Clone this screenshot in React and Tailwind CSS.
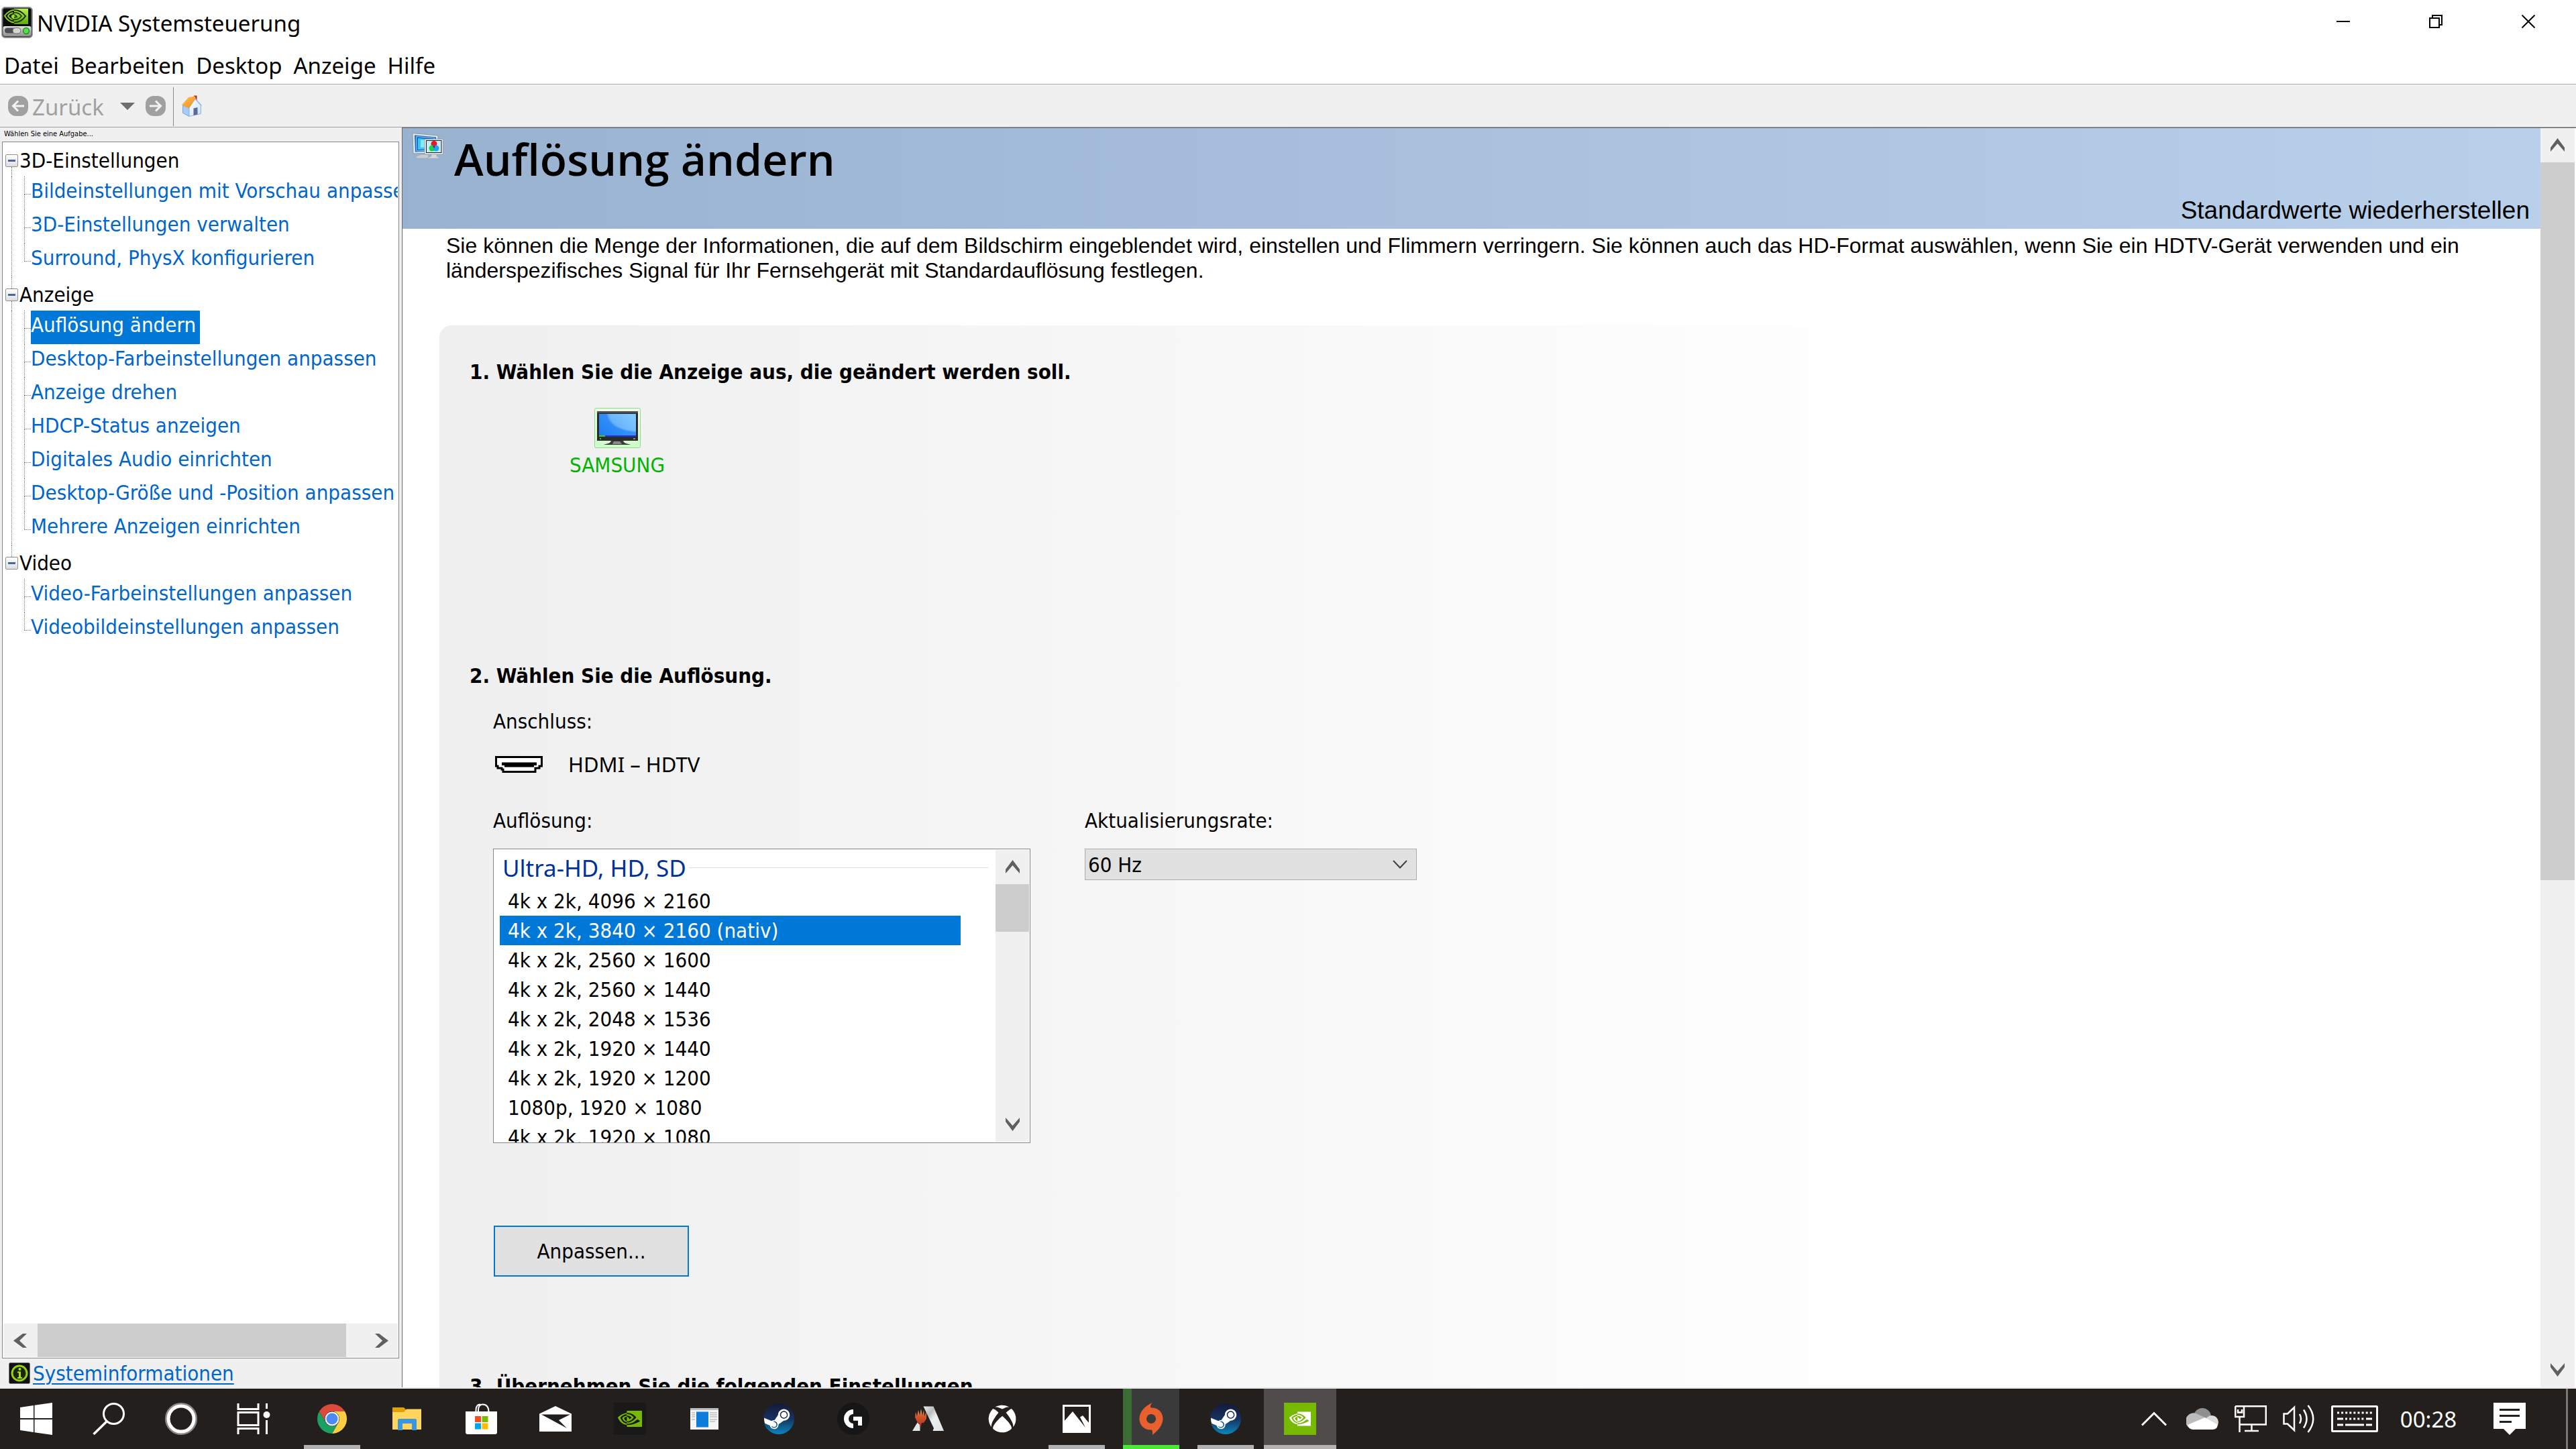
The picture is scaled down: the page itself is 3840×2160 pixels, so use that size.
import { SiNvidia, SiSteam } from "react-icons/si";
import { FaXbox } from "react-icons/fa";

const tahoma = "font-['DejaVu_Sans_Condensed','DejaVu_Sans',sans-serif]";
const segoe = "font-['Noto_Sans',sans-serif]";
const arial = "font-['Liberation_Sans',Arial,sans-serif]";

/* ---------- icons ---------- */

function AppIcon() {
  return (
    <svg className="size-[47px] shrink-0" viewBox="0 0 47 47" aria-hidden="true">
      <defs>
        <linearGradient id="appGreen" x1="0" y1="0" x2="0" y2="1">
          <stop offset="0" stopColor="#b7f04a" />
          <stop offset="1" stopColor="#5fa80c" />
        </linearGradient>
        <linearGradient id="appBar" x1="0" y1="0" x2="0" y2="1">
          <stop offset="0" stopColor="#e2e2e2" />
          <stop offset="1" stopColor="#8f8f8f" />
        </linearGradient>
      </defs>
      <rect x="0.5" y="0.5" width="46" height="46" rx="5" fill="#6f7474" stroke="#a5a9a9" />
      <rect x="2.5" y="2.5" width="42" height="42" rx="3" fill="#0d0d0d" />
      <rect x="19" y="3" width="21" height="23" fill="url(#appGreen)" />
      <path d="M19 5 C12 5 7 11 5 13.500 C8 19 13 23 19 23.500" fill="none" stroke="#8ccf1f" strokeWidth="2" />
      <path d="M19 9 C14 9 11 12 10 14 C12 17 15 19.500 19 19.500" fill="none" stroke="#8ccf1f" strokeWidth="2" />
      <path d="M19 5 C28 5 33 10 36 14 C32 20 27 23.500 19 23.500" fill="none" stroke="#16310a" strokeWidth="2" />
      <path d="M17 9 C24 8 28 11 30 14 C27 18 23 20 18 19 C15 17 14 15 15 13 C18 11 22 12 23 15 L19 16" fill="none" stroke="#22490c" strokeWidth="2" />
      <path d="M15 14 C16 12 18 11.500 19 11.500 V18.500 C16 18 15 16 15 14Z" fill="#a5e02c" />
      <rect x="2.500" y="29" width="42" height="15" rx="3" fill="url(#appBar)" />
      <rect x="5" y="31.500" width="24" height="8" rx="4" fill="#4b4f52" />
      <rect x="17" y="31.500" width="12" height="8.500" rx="4" fill="#d6d6d6" stroke="#707070" />
      <circle cx="37" cy="36" r="4.500" fill="#53e04c" stroke="#1b8f14" strokeWidth="1.500" />
    </svg>
  );
}

function CircleArrow({ right }) {
  return (
    <svg className="size-[30px] shrink-0" viewBox="0 0 30 30" aria-hidden="true">
      <rect width="30" height="30" rx="12" fill="#a0a0a0" />
      {right ? (
        <path d="M6 15H22M15 7.500L22.500 15L15 22.500" fill="none" stroke="#f3f3f3" strokeWidth="3" />
      ) : (
        <path d="M24 15H8M15 7.500L7.500 15L15 22.500" fill="none" stroke="#f3f3f3" strokeWidth="3" />
      )}
    </svg>
  );
}

function HomeIcon() {
  return (
    <svg className="h-8 w-[30px]" viewBox="0 0 30 32" aria-hidden="true">
      <defs>
        <linearGradient id="roof" x1="0" y1="0" x2="1" y2="1">
          <stop offset="0" stopColor="#ffc457" />
          <stop offset="1" stopColor="#f28a1c" />
        </linearGradient>
        <linearGradient id="wall" x1="0" y1="0" x2="1" y2="1">
          <stop offset="0" stopColor="#ffffff" />
          <stop offset="1" stopColor="#c9e0fa" />
        </linearGradient>
      </defs>
      <rect x="18" y="0.500" width="4.500" height="7" fill="#b3241c" />
      <path d="M1.500 15 L11 18.500 V31.500 L1.500 26.500Z" fill="#a6cdf6" stroke="#7fa6d6" />
      <path d="M11 18.500 L20 5.500 L28.500 15.500 V27.500 L11 31.500Z" fill="url(#wall)" stroke="#8fb2dc" />
      <path d="M17.500 19.500 L23.500 18 V28.500 L17.500 30Z" fill="#5f6796" />
      <path d="M0 14.500 L10 3 L20 1.500 L20.500 4.500 L10.500 19.500Z" fill="url(#roof)" />
      <path d="M19.500 4.500 L29.500 15.500" stroke="#a9b4cf" strokeWidth="1.500" />
    </svg>
  );
}

function ScreensIcon() {
  return (
    <svg className="h-[39px] w-[47px]" viewBox="0 0 47 39" aria-hidden="true">
      <path d="M1 0.500 L39 4 V30 L2 31Z" fill="#dfe5ea" stroke="#8e979f" />
      <path d="M4 3.500 L36 6.500 V27 L5 28.500Z" fill="#1668c4" />
      <path d="M6.500 5.500 L34 8 V25.500 L7 27Z" fill="none" stroke="#8ad8f8" />
      <path d="M9 8 L32 10 V24 L9 25Z" fill="#39c8f4" />
      <path d="M13 10.500 L28 11.500 V21 L13 22Z" fill="#8ee8fb" />
      <path d="M6 36 L13 33 H24 V37.500 H8Z" fill="#c9ced3" />
      <rect x="19" y="9.500" width="27.500" height="22.500" fill="#eef1f4" stroke="#9aa3ab" />
      <rect x="21.500" y="11.500" width="22.500" height="18" fill="#c6ecfb" stroke="#1e1e1e" />
      <circle cx="33" cy="16.500" r="4.500" fill="#f31222" />
      <circle cx="30" cy="23" r="4.500" fill="#13d83a" />
      <circle cx="36" cy="23" r="4.500" fill="#1aa7f5" />
      <path d="M31 19.500h4l-2 3.500z" fill="#5b1a78" />
      <path d="M29 32h8v3l5 3H21l8-3z" fill="#d3d7da" stroke="#9aa1a7" strokeWidth="0.500" />
    </svg>
  );
}

function MonitorIcon() {
  return (
    <svg className="h-[60px] w-[69px]" viewBox="0 0 69 60" aria-hidden="true">
      <defs>
        <linearGradient id="tile" x1="0" y1="0" x2="0" y2="1">
          <stop offset="0" stopColor="#f0fdef" />
          <stop offset="1" stopColor="#cdfbc9" />
        </linearGradient>
        <linearGradient id="screen" x1="0" y1="1" x2="1" y2="0.300">
          <stop offset="0" stopColor="#1f7ff5" />
          <stop offset="1" stopColor="#72c0ff" />
        </linearGradient>
      </defs>
      <rect x="0.500" y="0.500" width="68" height="59" rx="2" fill="url(#tile)" stroke="#8fdc86" />
      <rect x="4" y="5" width="61" height="44" fill="#2b2b2b" />
      <rect x="4" y="5" width="61" height="3" fill="#4c4c4c" />
      <rect x="7" y="9" width="55" height="34" fill="url(#screen)" />
      <path d="M7 9 H19 C20 22 32 34 62 36 V41 H7Z" fill="#1c7df6" opacity="0.550" />
      <path d="M21 9 H62 V34 C38 33 24 25 21 9Z" fill="#9ad3ff" opacity="0.350" />
      <rect x="7" y="41" width="55" height="2" fill="#2032d8" />
      <rect x="7" y="41" width="9" height="2" fill="#4fc32a" />
      <rect x="8" y="45" width="2" height="2" fill="#46c13a" />
      <rect x="58" y="45" width="3" height="2" fill="#8a8a8a" />
      <path d="M25 49h18c1 4 5 4 11 6H14c6-2 10-2 11-6z" fill="#3a3a3a" />
      <path d="M29 50h9l3 4H27z" fill="#8b8b8b" />
    </svg>
  );
}

function HdmiIcon() {
  return (
    <svg className="h-[25px] w-[71px]" viewBox="0 0 71 25" aria-hidden="true">
      <path d="M1.500 1.500H69.500V15H66V18H60V23.500H12V20H10V18H4V15H1.500Z" fill="#fff" stroke="#000" strokeWidth="3" />
      <path d="M10 9.500H62V14H58V16.500H14V14H10Z" fill="#000" />
    </svg>
  );
}

function InfoIcon() {
  return (
    <svg className="size-8 shrink-0" viewBox="0 0 32 32" aria-hidden="true">
      <rect x="0.500" y="0.500" width="31" height="31" rx="2" fill="#101010" stroke="#777" />
      <circle cx="16" cy="16" r="11" fill="#1a2606" stroke="#97cf12" strokeWidth="3" />
      <circle cx="16.500" cy="10" r="2" fill="#a9e11b" />
      <path d="M13 13.500h5V22h2v2h-7v-2h2v-6.500h-2z" fill="#a9e11b" />
    </svg>
  );
}

const chevrons = {
  up: "M0 14 L10.500 0 L21 14 V20 L10.500 8 L0 20Z",
  down: "M0 6 L10.500 20 L21 6 V0 L10.500 12 L0 0Z",
  left: "M14 0 L0 10.500 L14 21 H20 L9 10.500 L20 0Z",
  right: "M6 0 L20 10.500 L6 21 H0 L11 10.500 L0 0Z",
};

function Chevron({ dir }) {
  return (
    <svg className="size-[21px]" viewBox="0 0 21 21" aria-hidden="true">
      <path d={chevrons[dir]} fill="#606060" />
    </svg>
  );
}

/* ---------- taskbar icons ---------- */

const Windows = () => (
  <svg className="size-12" viewBox="0 0 48 48" fill="#fff"><path d="M0 7l20-3v19H0zM21.500 3.800L48 0v23H21.500zM0 25h20v19L0 41zM21.500 25H48v23l-26.500-3.800z" /></svg>
);
const Search = () => (
  <svg className="size-12" viewBox="0 0 48 48" fill="none" stroke="#fff" strokeWidth="3"><circle cx="31.500" cy="16.500" r="15" /><path d="M21 28L1.500 47" strokeWidth="3.500" /></svg>
);
const Cortana = () => (
  <svg className="size-12" viewBox="0 0 48 48" fill="none"><circle cx="24" cy="24" r="22" stroke="#8a8a8a" strokeWidth="4" /><circle cx="24" cy="24" r="19" stroke="#fff" strokeWidth="5" /></svg>
);
const TaskView = () => (
  <svg className="h-[46px] w-[50px]" viewBox="0 0 50 46" fill="none" stroke="#fff" strokeWidth="3"><path d="M2 0V8.500H32V0M2 46V37.500H32V46M2 13.500H32V32.500H2ZM44.500 0V8M44.500 25V46" /><circle cx="44.500" cy="17" r="5" fill="#fff" stroke="none" /></svg>
);
const Chrome = () => (
  <svg className="size-11" viewBox="0 0 44 44">
    <path d="M2.950 11A22 22 0 0 1 41.050 11L22 11A11 11 0 0 0 12.500 27.500Z" fill="#dc4a3e" />
    <path d="M41.050 11A22 22 0 0 1 22 44L31.500 27.500A11 11 0 0 0 22 11Z" fill="#ffcd42" />
    <path d="M22 44A22 22 0 0 1 2.950 11L12.500 27.500A11 11 0 0 0 31.500 27.500Z" fill="#1aa05f" />
    <circle cx="22" cy="22" r="10.500" fill="#fff" /><circle cx="22" cy="22" r="8.500" fill="#4b8bf5" />
  </svg>
);
const Explorer = () => (
  <svg className="h-9 w-[43px]" viewBox="0 0 43 36">
    <path d="M0 1H17L20 4V8H0Z" fill="#e0a000" /><path d="M0 8H17L21 3.500H43V34H0Z" fill="#ffd55e" />
    <path d="M8 35V20a2 2 0 0 1 2-2H34a2 2 0 0 1 2 2V35H29V25H15V35Z" fill="#3a96dd" />
  </svg>
);
const Store = () => (
  <svg className="h-[46px] w-[47px]" viewBox="0 0 47 46">
    <path d="M15.500 13V10C15.500 4 18 1.500 22 1.500M19 13V10C19 5 21 1.500 25.500 1.500C31 1.500 34.500 5 34.500 13" fill="none" stroke="#fff" strokeWidth="2" />
    <path d="M0 12H47V43a3 3 0 0 1-3 3H3a3 3 0 0 1-3-3Z" fill="#fff" />
    <path fill="#f25022" d="M14 19h9v9h-9z" /><path fill="#7fba00" d="M24.500 19h9v9h-9z" /><path fill="#00a4ef" d="M14 29.500h9v9h-9z" /><path fill="#ffb900" d="M24.500 29.500h9v9h-9z" />
  </svg>
);
const Mail = () => (
  <svg className="h-[38px] w-12" viewBox="0 0 48 38"><path d="M0 11.500L24 0L48 11.500V38H0Z" fill="#fff" /><path d="M3 12.500H46L29 21L41 33Z" fill="#221e1d" /></svg>
);
const NvidiaDark = () => (
  <span className="flex size-12 items-center justify-center bg-[#191919]"><SiNvidia className="size-[36px] text-[#76b900]" /></span>
);
const PanelApp = () => (
  <svg className="h-8 w-[42px]" viewBox="0 0 42 32">
    <rect width="42" height="32" fill="#f4f4f4" /><rect width="42" height="3" fill="#b9bdc2" /><rect x="9" y="5.500" width="18" height="23" fill="#0c7bdc" />
    <path d="M29 7H40M29 10H40M29 13H40M29 17H40M29 20H37M2 7H7M2 10H7M2 13H7M2 17H7" stroke="#a3a3a3" strokeWidth="1.200" />
  </svg>
);
const Steam = () => (
  <span className="relative flex size-[46px] items-center justify-center">
    <svg className="absolute inset-0 size-[46px]" viewBox="0 0 46 46">
      <defs><linearGradient id="steamBg" x1="0" y1="0" x2="0" y2="1"><stop offset="0" stopColor="#131a38" /><stop offset="0.500" stopColor="#17315f" /><stop offset="1" stopColor="#0a86bd" /></linearGradient></defs>
      <circle cx="23" cy="23" r="22" fill="#fff" />
    </svg>
    <SiSteam className="relative size-[46px]" fill="url(#steamBg)" />
  </span>
);
const Ghub = () => (
  <svg className="size-12" viewBox="0 0 48 48"><circle cx="24" cy="24" r="24" fill="#161616" /><path d="M24 10A14 14 0 0 0 24 38V31A7 7 0 0 1 24 17ZM24 20.700H37V34H31V26.700H24Z" fill="#fff" /></svg>
);
const Arena = () => (
  <svg className="h-[38px] w-[47px]" viewBox="0 0 47 38">
    <defs><linearGradient id="metal" x1="0" y1="0" x2="1" y2="1"><stop offset="0" stopColor="#f0f0f0" /><stop offset="0.300" stopColor="#b9bcbc" /><stop offset="0.500" stopColor="#eceeee" /><stop offset="1" stopColor="#dfe3e3" /></linearGradient><linearGradient id="flame" x1="0" y1="0" x2="0" y2="1"><stop offset="0" stopColor="#e8b070" /><stop offset="0.400" stopColor="#d3562a" /><stop offset="1" stopColor="#b5261c" /></linearGradient></defs>
    <path d="M16.500 0.500H31.500L47 37H30.500L32 33Z" fill="url(#metal)" /><path d="M0 37H11.500V28L7.500 24.500Z" fill="#e3e6e6" />
    <path d="M4 17L5 9L7 15L9 6L11 14L13 4L15 14L17 6L18 15L21 9V19L17 25H14L12 33L10 25H8Z" fill="url(#flame)" />
  </svg>
);
const Photos = () => (
  <svg className="size-[42px]" viewBox="0 0 42 42"><rect x="1.500" y="1.500" width="39" height="39" fill="none" stroke="#fff" strokeWidth="3" /><path d="M2 25L15 10L34 34L26 18.500L30 16L40 28V41H2Z" fill="#fff" /></svg>
);
const Origin = () => (
  <svg className="h-12 w-9" viewBox="0 0 36 48"><path fillRule="evenodd" d="M20 0C17 3 16.500 5 17.500 7.500C29 7 36 15 35.500 25C35 33 29 41 20 48C20 46 20.500 43 19 40.500C7 41 0 33 0.500 23C1 14 8 5 20 0ZM18 17a7 7 0 1 0 0.100 0Z" fill="#e9602e" /></svg>
);
const NvidiaTile = () => (
  <span className="flex size-12 items-center justify-center bg-[#76b900]"><SiNvidia className="size-[32px] text-white" /></span>
);

const systemButtons = [["Start", Windows], ["Suche", Search], ["Cortana", Cortana], ["Taskansicht", TaskView]];
const apps = [
  { name: "Google Chrome", Icon: Chrome, state: "open" },
  { name: "Explorer", Icon: Explorer },
  { name: "Microsoft Store", Icon: Store },
  { name: "Mail", Icon: Mail },
  { name: "GeForce Experience", Icon: NvidiaDark },
  { name: "Programmfenster", Icon: PanelApp },
  { name: "Steam", Icon: Steam },
  { name: "Logitech G HUB", Icon: Ghub },
  { name: "MTG Arena", Icon: Arena },
  { name: "Xbox", Icon: () => <FaXbox className="size-[42px] text-white" /> },
  { name: "Fotos", Icon: Photos, state: "open" },
  { name: "Origin", Icon: Origin, state: "busy" },
  { name: "Steam-Fenster", Icon: Steam, state: "open" },
  { name: "NVIDIA Systemsteuerung", Icon: NvidiaTile, state: "active" },
];

const slotStyle = {
  none: "w-[84px] border-transparent",
  open: "w-[84px] border-[#b1b1b1]",
  busy: "w-[84px] border-[#4ae734] bg-[linear-gradient(90deg,#3c6b35_13px,#3a3a3b_13px)]",
  active: "-mx-3 w-[108px] border-[#b3b2b1] bg-[#4f4c4b]",
};

const tray = [
  ["Ausgeblendete Symbole", <svg key="c" className="h-[22px] w-[38px]" viewBox="0 0 38 22" fill="none" stroke="#fff" strokeWidth="3"><path d="M1 20.500L19 2.500L37 20.500" /></svg>],
  ["OneDrive", <svg key="o" className="h-8 w-12" viewBox="0 0 48 32"><circle cx="24" cy="13" r="13" fill="#8f8f8f" /><path d="M8 31A12 12 0 1 1 17 9L30 15L8 31Z" fill="#bcbcbc" /><circle cx="38" cy="21" r="10" fill="#dcdcdc" /><path d="M2 25L28 14L47 25Q46 32 39 32H10Q4 32 2 25Z" fill="#fff" /></svg>],
  ["Netzwerk", <svg key="n" className="h-10 w-12" viewBox="0 0 48 40" fill="none" stroke="#fff" strokeWidth="2.500"><path d="M1.200 1.200H46.800V28.500H8M1.200 1.200V17H14V1.200M7.500 17V40M25.500 29V38M15 38H36M5 6V10.500H11V6" /></svg>],
  ["Lautstärke", <svg key="v" className="h-[42px] w-12" viewBox="0 0 48 42" fill="none" stroke="#fff" strokeWidth="2.500"><path d="M1.500 13.500H7L17 4V38L7 28.500H1.500ZM25 14Q29 21 25 28M31 7.500Q40 21 31 34.500M37.500 1Q53 21 37.500 41" /></svg>],
];

/* ---------- sidebar ---------- */

const tree = [
  ["3D-Einstellungen", ["Bildeinstellungen mit Vorschau anpassen", "3D-Einstellungen verwalten", "Surround, PhysX konfigurieren"]],
  ["Anzeige", ["Auflösung ändern", "Desktop-Farbeinstellungen anpassen", "Anzeige drehen", "HDCP-Status anzeigen", "Digitales Audio einrichten", "Desktop-Größe und -Position anpassen", "Mehrere Anzeigen einrichten"]],
  ["Video", ["Video-Farbeinstellungen anpassen", "Videobildeinstellungen anpassen"]],
];

function TreeGroup({ label, items, first, last }) {
  return (
    <li>
      <div className="flex h-[50px]">
        <div className="flex w-[19px] flex-col items-center">
          <div className={`h-[17px] w-px shrink-0 border-l border-dotted ${first ? "border-transparent" : "border-[#707070]"}`} />
          <button aria-label={`${label} einklappen`} className="flex size-[19px] shrink-0 items-center justify-center rounded-xs border border-[#919191] bg-linear-to-b from-white to-[#dedede]">
            <span className="h-[3px] w-[11px] bg-[#4b63a7]" />
          </button>
          <div className={`w-px grow border-l border-dotted ${last ? "border-transparent" : "border-[#707070]"}`} />
        </div>
        <span className="pl-0.5 leading-[52px] whitespace-nowrap">{label}</span>
      </div>
      <ul className={`ml-[9px] border-l border-dotted pl-[18px] ${last ? "border-transparent" : "border-[#707070]"}`}>
        {items.map((item, i) => (
          <li key={item} className="flex h-[50px]">
            <div className="w-2.5 shrink-0">
              <div className="h-[27px] border-b border-l border-dotted border-[#707070]" />
              {i < items.length - 1 && <div className="h-[23px] border-l border-dotted border-[#707070]" />}
            </div>
            <a
              href="#aufgabe"
              className={`pr-1.5 leading-[43px] whitespace-nowrap ${item === "Auflösung ändern" ? "bg-[#0078d7] text-white" : "text-[#0066cc]"}`}
            >
              {item}
            </a>
          </li>
        ))}
      </ul>
    </li>
  );
}

function Sidebar() {
  return (
    <aside className={`flex w-[600px] shrink-0 flex-col border-r border-[#696969] bg-[#f0f0f0] pr-1 pl-[3px] text-[31px] ${tahoma}`}>
      <p className="h-[21px] pl-[3px] text-[11px] leading-[20px]">Wählen Sie eine Aufgabe...</p>
      <nav className="flex min-h-0 grow flex-col border border-[#828790] bg-white p-px" aria-label="Aufgaben">
        <ul className="min-h-0 grow overflow-hidden pl-[3px]">
          {tree.map(([label, items], i) => (
            <TreeGroup key={label} label={label} items={items} first={i === 0} last={i === tree.length - 1} />
          ))}
        </ul>
        <div className="flex h-[50px] shrink-0 bg-[#f0f0f0]">
          <button aria-label="Nach links" className="flex w-[51px] items-center justify-center"><Chevron dir="left" /></button>
          <div className="flex grow"><div className="w-[94%] bg-[#cdcdcd]" /></div>
          <button aria-label="Nach rechts" className="flex w-12 items-center justify-center"><Chevron dir="right" /></button>
        </div>
      </nav>
      <div className="flex h-[43px] items-center gap-1 pl-2.5">
        <InfoIcon />
        <a href="#info" className="leading-[46px] text-[#0066cc] underline decoration-2 underline-offset-4">Systeminformationen</a>
      </div>
    </aside>
  );
}

/* ---------- main pane ---------- */

const modes = [
  "4k x 2k, 4096 × 2160",
  "4k x 2k, 3840 × 2160 (nativ)",
  "4k x 2k, 2560 × 1600",
  "4k x 2k, 2560 × 1440",
  "4k x 2k, 2048 × 1536",
  "4k x 2k, 1920 × 1440",
  "4k x 2k, 1920 × 1200",
  "1080p, 1920 × 1080",
  "4k x 2k, 1920 × 1080",
];

function ResolutionList() {
  return (
    <div className="flex h-[439px] w-[801px] border border-[#828790] bg-white">
      <div className="min-w-0 grow overflow-hidden">
        <div className="flex h-[55px] items-center gap-1 pr-[11px] pl-[13px]">
          <span className={`text-[35px] leading-[58px] whitespace-nowrap text-[#003399] ${segoe}`}>Ultra-HD, HD, SD</span>
          <span className="h-px grow bg-[#d5e1ea]" />
        </div>
        <ul role="listbox" aria-labelledby="resolution-label" className="mr-[52px] ml-[9px]">
          {modes.map((m, i) => (
            <li key={m + i} role="option" aria-selected={i === 1} className={`h-11 pl-3 leading-[45px] ${i === 1 ? "bg-[#0078d7] text-white" : ""}`}>
              {m}
            </li>
          ))}
        </ul>
      </div>
      <div className="my-px mr-px flex w-[50px] shrink-0 flex-col bg-[#f0f0f0]">
        <button aria-label="Liste nach oben" className="flex h-[51px] items-center justify-center"><Chevron dir="up" /></button>
        <div className="h-[71px] bg-[#cdcdcd]" />
        <div className="grow" />
        <button aria-label="Liste nach unten" className="flex h-[51px] items-center justify-center"><Chevron dir="down" /></button>
      </div>
    </div>
  );
}

function Main() {
  return (
    <div className="flex min-w-0 grow border-t border-[#696969]">
      <main className="min-w-0 grow overflow-hidden bg-white">
        <header className="flex h-[150px] justify-between bg-linear-to-r from-[#99b2d0] to-[#b9d0eb] pr-4 pl-3.5">
          <div className="flex items-start gap-4">
            <div className="pt-[7px]"><ScreensIcon /></div>
            <h1 className="font-['Open_Sans',sans-serif] text-[66px] leading-[90px] font-semibold whitespace-nowrap">Auflösung ändern</h1>
          </div>
          <button className={`self-end pb-1.5 text-[37px] leading-[42px] whitespace-nowrap ${arial}`}>Standardwerte wiederherstellen</button>
        </header>
        <p className={`h-[144px] pt-[7px] pr-16 pl-[65px] text-[32px] leading-[37px] ${arial}`}>
          Sie können die Menge der Informationen, die auf dem Bildschirm eingeblendet wird, einstellen und Flimmern verringern. Sie können auch das HD-Format auswählen, wenn Sie ein HDTV-Gerät verwenden und ein länderspezifisches Signal für Ihr Fernsehgerät mit Standardauflösung festlegen.
        </p>
        <div className={`ml-[55px] rounded-tl-[18px] bg-[linear-gradient(90deg,#efefef,#ffffff_70%)] pt-[50px] pl-[45px] text-[31px] leading-[38px] ${tahoma}`}>
          <section className="h-[453px]">
            <h2 className="font-bold">1. Wählen Sie die Anzeige aus, die geändert werden soll.</h2>
            <button className="mt-[35px] ml-[148px] flex w-[144px] flex-col items-center gap-1.5 text-[#00b400]">
              <MonitorIcon />
              SAMSUNG
            </button>
          </section>
          <section>
            <h2 className="font-bold">2. Wählen Sie die Auflösung.</h2>
            <div className="pl-[35px]">
              <p className="mt-[30px]">Anschluss:</p>
              <p className="mt-[26px] flex items-center gap-[38px] pl-[3px]"><HdmiIcon /><span className={segoe}>HDMI – HDTV</span></p>
              <div className="mt-[46px] flex gap-[81px]">
                <div className="flex flex-col gap-[23px]">
                  <span id="resolution-label">Auflösung:</span>
                  <ResolutionList />
                </div>
                <div className="flex flex-col gap-[23px]">
                  <label htmlFor="rate">Aktualisierungsrate:</label>
                  <div className="grid w-[495px] items-center">
                    <select id="rate" defaultValue="60" className="col-start-1 row-start-1 h-[47px] appearance-none border border-[#adadad] bg-[#e1e1e1] pt-0.5 pl-1 leading-[43px]">
                      <option value="60">60 Hz</option>
                    </select>
                    <svg className="pointer-events-none z-10 col-start-1 row-start-1 mr-3.5 h-[13px] w-[22px] justify-self-end" viewBox="0 0 22 13" fill="none" stroke="#404040" strokeWidth="2" aria-hidden="true"><path d="M1 1L11 11.500L21 1" /></svg>
                  </div>
                </div>
              </div>
              <button className="mt-[123px] ml-px h-[76px] w-[291px] border-2 border-[#0078d7] bg-[#e1e1e1]">Anpassen...</button>
            </div>
          </section>
          <section className="mt-[144px]">
            <h2 className="font-bold">3. Übernehmen Sie die folgenden Einstellungen.</h2>
          </section>
        </div>
      </main>
      <div className="mr-0.5 flex w-[51px] shrink-0 flex-col bg-[#f0f0f0]">
        <button aria-label="Nach oben" className="flex h-[51px] shrink-0 items-center justify-center"><Chevron dir="up" /></button>
        <div className="grow"><div className="h-[60.3%] bg-[#cdcdcd]" /></div>
        <button aria-label="Nach unten" className="flex h-[51px] shrink-0 items-center justify-center"><Chevron dir="down" /></button>
      </div>
    </div>
  );
}

function Taskbar() {
  return (
    <footer className={`flex h-[90px] shrink-0 bg-[#221f1d] text-white ${segoe}`}>
      <div className="flex">
        {systemButtons.map(([name, Icon]) => (
          <button key={name} aria-label={name} className="flex w-[108px] items-center justify-center"><Icon /></button>
        ))}
      </div>
      <div className="flex gap-[27px] pl-[21px]">
        {apps.map(({ name, Icon, state = "none" }) => (
          <button key={name} aria-label={name} className={`flex items-center justify-center border-b-6 pt-1.5 ${slotStyle[state]}`}><Icon /></button>
        ))}
      </div>
      <div className="ml-auto flex">
        {tray.map(([name, icon]) => (
          <button key={name} aria-label={name} className="flex w-[72px] items-center justify-center">{icon}</button>
        ))}
        <button aria-label="Bildschirmtastatur" className="flex w-[94px] items-center justify-center">
          <svg className="h-10 w-[70px]" viewBox="0 0 70 40" fill="none" stroke="#fff" strokeWidth="3">
            <rect x="1.500" y="1.500" width="67" height="37" rx="1" />
            <path d="M9 11H61M21 20H50" strokeDasharray="3 3.100" />
            <path d="M9 20H18M52 20H61M9 29H18M21 29H49M52 29H61" />
          </svg>
        </button>
        <time className="w-[126px] text-center text-[33px] leading-[92px]">00:28</time>
        <button aria-label="Benachrichtigungen" className="flex w-[116px] items-center justify-center">
          <svg className="size-12" viewBox="0 0 48 48"><path d="M0 0H48V39H33L24 48L15 39H0Z" fill="#fff" /><path d="M9 10.500H39M9 19.500H39M9 28.500H27" stroke="#221f1d" strokeWidth="3" /></svg>
        </button>
        <div className="mr-3 ml-[26px] w-[3px] bg-[#7b7978]" />
      </div>
    </footer>
  );
}

export default function App() {
  return (
    <div className="flex h-screen flex-col overflow-hidden bg-white text-black">
      <div className={`flex h-[70px] shrink-0 items-center pl-0.5 text-[33px] ${segoe}`}>
        <div className="flex items-center gap-1.5">
          <div className="pb-1"><AppIcon /></div>
          <span className="leading-[70px]">NVIDIA Systemsteuerung</span>
        </div>
        <div className="ml-auto flex h-16 self-start pr-0.5">
          <button aria-label="Minimieren" className="flex w-[138px] items-center justify-center"><svg className="size-5" viewBox="0 0 20 20" stroke="#000" strokeWidth="2"><path d="M0 10H20" /></svg></button>
          <button aria-label="Verkleinern" className="flex w-[138px] items-center justify-center"><svg className="size-5" viewBox="0 0 20 20" fill="none" stroke="#000" strokeWidth="2"><path d="M1 5H15V19H1ZM5 5V1H19V15H15" /></svg></button>
          <button aria-label="Schließen" className="flex w-[138px] items-center justify-center"><svg className="size-5" viewBox="0 0 20 20" stroke="#000" strokeWidth="2"><path d="M0.500 0.500L19.500 19.500M19.500 0.500L0.500 19.500" /></svg></button>
        </div>
      </div>
      <nav aria-label="Menü" className={`flex h-14 shrink-0 gap-[17px] border-b border-[#a0a0a0] pl-1.5 text-[33px] leading-[54px] ${segoe}`}>
        {["Datei", "Bearbeiten", "Desktop", "Anzeige", "Hilfe"].map((m) => <button key={m}>{m}</button>)}
      </nav>
      <div className={`flex h-16 shrink-0 items-center border-t border-b border-t-white border-b-[#a0a0a0] bg-[#f0f0f0] pl-3 ${segoe}`}>
        <button className="flex items-center gap-1.5 text-[33px] leading-[66px] text-[#a0a0a0]"><CircleArrow /><span className="pt-1">Zurück</span></button>
        <button aria-label="Verlauf" className="ml-6"><svg className="h-[11px] w-[22px]" viewBox="0 0 22 11"><path d="M0 0H22L11 11Z" fill="#6d6e72" /></svg></button>
        <button aria-label="Vorwärts" className="ml-4"><CircleArrow right /></button>
        <div className="mt-0.5 ml-[11px] h-[58px] w-px bg-[#8a8a8a]" />
        <button aria-label="Startseite" className="ml-3"><HomeIcon /></button>
      </div>
      <div className="flex min-h-0 grow border-b border-[#e3e3e3]">
        <Sidebar />
        <Main />
      </div>
      <div className="h-px shrink-0 bg-white" />
      <Taskbar />
    </div>
  );
}
